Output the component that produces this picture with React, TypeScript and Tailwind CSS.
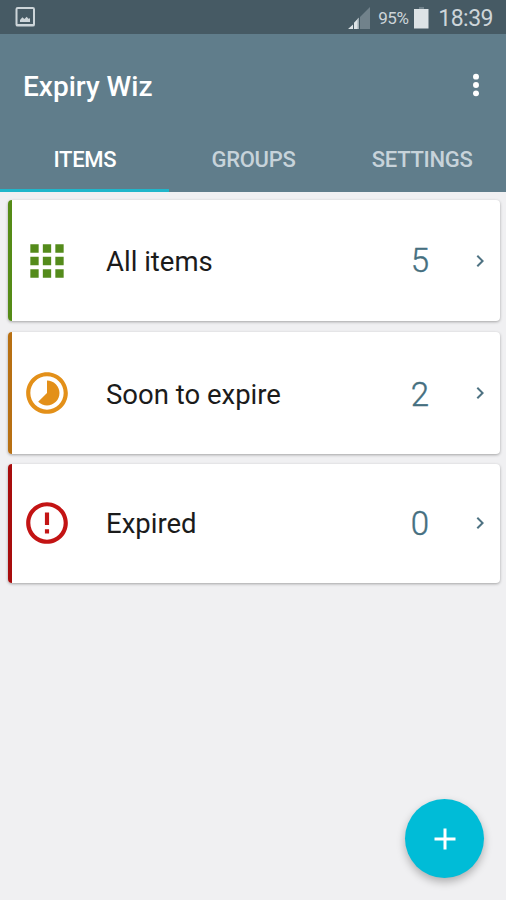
import type { ReactNode } from "react";
import clsx from "clsx";

interface CategoryCardProps {
  label: string;
  count: number;
  icon: ReactNode;
  cardClass: string;
  accentClass: string;
  iconClass?: string;
  labelClass: string;
  countClass?: string;
}

function StatusBar() {
  return (
    <div className="flex h-[34px] items-center bg-[#465a64] pl-[15px] pr-[13px] text-[#cdd5d9]">
      <svg className="h-5 w-5" viewBox="0 0 20 20" fill="none">
        <rect x="1.5" y="1" width="17.5" height="17.6" rx="1.2" stroke="currentColor" strokeWidth="2" />
        <path d="M1.5 17H19v2H1.5z" fill="currentColor" />
        <path d="M5 15v-2l2.4-2.7 2 1.7 2.3-2.2 1.7 1.9 1.6-.4V15z" fill="currentColor" />
      </svg>
      <div className="ml-auto flex items-center pt-px">
        <svg className="mr-2 h-[22px] w-[22px]" viewBox="0 0 22 22">
          <path d="M22 0v22H12V10z" fill="#71828b" />
          <path d="M0 22l5-4.6V22zM6 22v-6.2L10.5 11v11z" fill="#dde3e6" />
          <path d="M9.5 12l1.5-1.6V22H9.5z" fill="#a3afb5" />
        </svg>
        <span className="w-[36px] whitespace-nowrap pt-px text-[17px] leading-none tracking-[-0.4px]">95%</span>
        <svg className="mr-[9px] h-[22px] w-[15px]" viewBox="0 0 15 22">
          <path d="M5 0h5v2H5z" fill="#71828b" />
          <path d="M0 2h14.5v19.5H0z" fill="#dde3e6" />
        </svg>
        <span className="whitespace-nowrap pt-px text-[23px] leading-none tracking-[-0.5px]">18:39</span>
      </div>
    </div>
  );
}

function AppBar() {
  return (
    <header className="h-[158px] bg-[#607d8b]">
      <div className="flex h-[103px] items-center justify-between pl-[23px] pr-[13px]">
        <h1 className="pt-[2px] text-[28px] font-medium leading-8 text-white">Expiry Wiz</h1>
        <button aria-label="More options" className="-mt-[2px]">
          <svg className="h-[34px] w-[34px]" viewBox="0 0 24 24" fill="white">
            <circle cx="12" cy="6.1" r="2.1" />
            <circle cx="12" cy="12" r="2.1" />
            <circle cx="12" cy="17.9" r="2.1" />
          </svg>
        </button>
      </div>
      <nav className="grid h-[55px] grid-cols-3 text-[22px] font-medium leading-6">
        {["ITEMS", "GROUPS", "SETTINGS"].map((tab, index) => (
          <button
            key={tab}
            className={clsx(
              "border-b-[3px] pb-[6px] pl-px tracking-[-0.3px]",
              index === 0 ? "border-[#20b6ca] text-white" : "border-transparent text-[#c7d3da]"
            )}
          >
            {tab}
          </button>
        ))}
      </nav>
    </header>
  );
}

function CategoryCard({
  label,
  count,
  icon,
  cardClass,
  accentClass,
  iconClass,
  labelClass,
  countClass,
}: CategoryCardProps) {
  return (
    <div
      className={clsx(
        "flex items-center overflow-hidden rounded-[4px] bg-white shadow-[0_1px_3px_rgba(0,0,0,0.32)]",
        cardClass
      )}
    >
      <div className={clsx("h-full w-1 shrink-0", accentClass)} />
      <div className={clsx("ml-[10px] h-[50px] w-[50px] shrink-0", iconClass)}>{icon}</div>
      <span className={clsx("ml-[34px] flex-1 text-[27.5px] leading-8 text-[#1b1b1b]", labelClass)}>{label}</span>
      <span
        className={clsx(
          "w-10 text-center text-[33px] font-light leading-9 text-[#456f7f] [-webkit-text-stroke:0.4px_#456f7f]",
          countClass
        )}
      >
        {count}
      </span>
      <svg className={clsx("ml-7 mr-2 h-6 w-6 shrink-0", iconClass)} viewBox="0 0 24 24" fill="#4f7383">
        <path d="M10 6L8.59 7.41 13.17 12l-4.58 4.59L10 18l6-6z" />
      </svg>
    </div>
  );
}

const gridIcon = (
  <svg viewBox="0 0 24 24" fill="#548b1b">
    <path d="M4 8h4V4H4v4zm6 12h4v-4h-4v4zm-6 0h4v-4H4v4zm0-6h4v-4H4v4zm6 0h4v-4h-4v4zm6-10v4h4V4h-4zm-6 4h4V4h-4v4zm6 6h4v-4h-4v4zm0 6h4v-4h-4v4z" />
  </svg>
);

const timelapseIcon = (
  <svg viewBox="0 0 24 24" fill="#e39019">
    <path d="M16.24 7.76C15.07 6.59 13.54 6 12 6v6l-4.24 4.24c2.34 2.34 6.14 2.34 8.49 0 2.34-2.34 2.34-6.14-.01-8.48zM12 2C6.48 2 2 6.48 2 12s4.48 10 10 10 10-4.48 10-10S17.52 2 12 2zm0 18c-4.42 0-8-3.58-8-8s3.58-8 8-8 8 3.58 8 8-3.58 8-8 8z" />
  </svg>
);

const errorIcon = (
  <svg viewBox="0 0 24 24" fill="#c31414">
    <path d="M11 15h2v2h-2zm0-8h2v6h-2zm.99-5C6.47 2 2 6.48 2 12s4.47 10 9.99 10C17.52 22 22 17.52 22 12S17.52 2 11.99 2zM12 20c-4.42 0-8-3.58-8-8s3.58-8 8-8 8 3.58 8 8-3.58 8-8 8z" />
  </svg>
);

export default function App() {
  return (
    <div className="relative h-[900px] w-[506px] overflow-hidden bg-[#f0f0f2] font-['Roboto',sans-serif]">
      <StatusBar />
      <AppBar />
      <main className="flex flex-col pl-2 pr-[6px] pt-2">
        <CategoryCard
          label="All items"
          count={5}
          icon={gridIcon}
          cardClass="h-[121px]"
          accentClass="bg-[#558b17]"
          labelClass="pt-[3px]"
        />
        <CategoryCard
          label="Soon to expire"
          count={2}
          icon={timelapseIcon}
          cardClass="mt-[11px] h-[122px]"
          accentClass="bg-[#b87013]"
          labelClass="pt-[3px]"
          countClass="pt-[3px]"
        />
        <CategoryCard
          label="Expired"
          count={0}
          icon={errorIcon}
          cardClass="mt-[10px] h-[119px]"
          accentClass="bg-[#a80d0d]"
          iconClass="mb-[2px]"
          labelClass="pt-px"
          countClass="pt-px"
        />
      </main>

      {/* Floating add button */}
      <button
        aria-label="Add item"
        className="absolute bottom-[22px] right-[22px] flex h-[79px] w-[79px] items-center justify-center rounded-full bg-[#00bcd7] shadow-[0_4px_8px_rgba(0,0,0,0.28)]"
      >
        <svg className="h-9 w-9" viewBox="0 0 24 24" fill="white">
          <path d="M19 13h-6v6h-2v-6H5v-2h6V5h2v6h6v2z" />
        </svg>
      </button>
    </div>
  );
}
